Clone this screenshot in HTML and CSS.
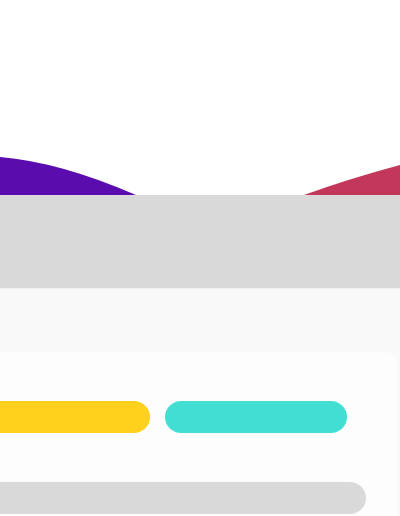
FILE: index.html
```html
<!DOCTYPE html>
<html lang="en">
<head>
<meta charset="utf-8">
<title>Screen</title>
<link rel="stylesheet" href="styles.css">
</head>
<body>
<div class="hero">
  <svg class="waves" width="400" height="195" viewBox="0 0 400 195" xmlns="http://www.w3.org/2000/svg">
    <path d="M0 157 Q60 162 136 195 L0 195 Z" fill="#5a0cae"/>
    <path d="M304 195 Q348 179 400 165 L400 195 Z" fill="#c2375a"/>
  </svg>
</div>
<div class="band"></div>
<main class="content">
  <section class="card">
    <div class="row">
      <span class="pill pill-yellow"></span>
      <span class="pill pill-teal"></span>
    </div>
    <div class="row">
      <span class="pill pill-grey"></span>
    </div>
  </section>
</main>
</body>
</html>
```
FILE: styles.css
```css
html, body {
  margin: 0;
  padding: 0;
  background: #ffffff;
  font-family: "Liberation Sans", Arial, sans-serif;
  overflow: hidden;
}
.hero {
  height: 195px;
}
.waves {
  display: block;
}
.band {
  height: 93px;
  background: #d9d9d9;
}
.content {
  background: #f9f9f9;
  border-top: 1px solid #f1f1f1;
  padding-top: 63px;
}
.card {
  margin-left: -48px;
  width: 445px;
  box-sizing: border-box;
  background: #fdfdfd;
  border-top-right-radius: 12px;
  padding: 49px 0 0 16px;
  display: flex;
  flex-direction: column;
  gap: 49px;
  height: 164px;
}
.row {
  display: flex;
  gap: 15px;
}
.pill {
  display: block;
  height: 32px;
  border-radius: 16px;
}
.pill-yellow {
  width: 182px;
  background: #ffd01c;
}
.pill-teal {
  width: 182px;
  background: #43ded2;
}
.pill-grey {
  width: 398px;
  background: #d9d9d9;
}
```
